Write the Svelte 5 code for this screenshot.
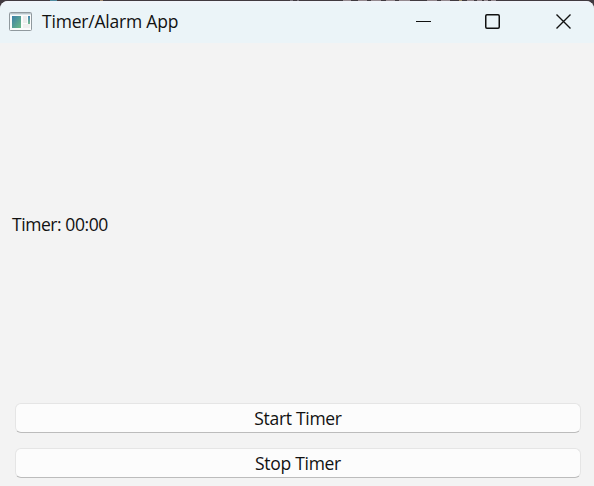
<script>
  const actions = ['Start Timer', 'Stop Timer'];
  const glints = [
    [50, 7, '#4f8ba0'],
    [100, 3, '#a08a70'],
    [290, 3, '#77737c'],
    [297, 2, '#77737c'],
    [343, 8, '#94898f'],
    [358, 9, '#94898f'],
    [371, 10, '#94898f'],
    [386, 9, '#94898f'],
    [399, 11, '#94898f'],
    [427, 10, '#94898f'],
    [441, 9, '#94898f'],
    [459, 3, '#a09070'],
    [467, 7, '#94898f'],
    [477, 5, '#94898f'],
    [484, 4, '#94898f'],
    [491, 5, '#94898f'],
  ];
</script>

<div class="desktop">
  <svg class="backdrop" width="594" height="1" viewBox="0 0 594 1">
    {#each glints as [x, width, fill]}
      <rect {x} y="0" {width} height="1" {fill} />
    {/each}
  </svg>
  <div class="window">
    <header>
      <svg class="app-icon" width="24" height="20" viewBox="0 0 24 20">
        <defs>
          <linearGradient id="pane" x1="0" y1="0" x2="1" y2="1">
            <stop offset="0" stop-color="#3c7fa8" />
            <stop offset="1" stop-color="#6dbb85" />
          </linearGradient>
          <linearGradient id="strip" x1="0" y1="0" x2="0" y2="1">
            <stop offset="0" stop-color="#4684b4" />
            <stop offset="1" stop-color="#79bd91" />
          </linearGradient>
        </defs>
        <rect x=".5" y=".5" width="22" height="18" rx="1" fill="#fbfcfc" stroke="#90999e" />
        <path d="M1 1.5h21" stroke="#b8c4ca" />
        <path d="M1 2.5h21" stroke="#dce4e8" />
        <rect x="3" y="4" width="9" height="12" fill="url(#pane)" />
        <rect x="14" y="4" width="4" height="7" fill="#ececec" />
        <rect x="14" y="12" width="7" height="4" fill="#f0f0f0" />
        <rect x="19" y="4" width="2" height="8" fill="url(#strip)" />
      </svg>
      <h1>Timer/Alarm App</h1>
      <div class="controls">
        <svg width="16" height="16" viewBox="0 0 16 16"><path d="M0 7.5h15" stroke="#111" stroke-width="1.1" /></svg>
        <svg width="16" height="16" viewBox="0 0 16 16"><rect x=".75" y=".75" width="13.5" height="13.5" rx="1.2" fill="none" stroke="#111" stroke-width="1.5" /></svg>
        <svg width="16" height="16" viewBox="0 0 16 16"><path d="M.5 .5l14 14M14.5 .5l-14 14" stroke="#111" stroke-width="1.4" /></svg>
      </div>
    </header>
    <main>
      <p><span>Timer: 00:00</span></p>
      {#each actions as action}
        <button>{action}</button>
      {/each}
    </main>
  </div>
</div>

<style>
  :global(body) {
    margin: 0;
  }
  .desktop {
    box-sizing: border-box;
    width: 594px;
    height: 486px;
    background: #403a40;
    overflow: hidden;
    font-family: 'Open Sans', 'Noto Sans', sans-serif;
    color: #111;
  }
  .window {
    height: 485px;
    display: flex;
    flex-direction: column;
    background: #f3f3f3;
    border-radius: 8px 8px 0 0;
    overflow: hidden;
  }
  header {
    box-sizing: border-box;
    height: 42px;
    flex: none;
    display: flex;
    align-items: center;
    padding: 0 22px 0 9px;
    background: linear-gradient(#f0f4fa, #ebf4f8 6px);
  }
  h1 {
    margin: 0 0 2px 9px;
    font-size: 17.5px;
    line-height: 24px;
    font-weight: 400;
    letter-spacing: -0.2px;
  }
  .controls {
    display: flex;
    gap: 54px;
    margin-left: auto;
  }
  .controls svg:nth-child(2) {
    margin: 0 1px 0 -1px;
  }
  svg {
    display: block;
  }
  main {
    flex: 1;
    display: flex;
    flex-direction: column;
    padding: 0 13px 8px 15px;
  }
  p {
    flex: 1;
    display: flex;
    align-items: center;
    margin: 16px 0 0 -3px;
    font-size: 17.5px;
    line-height: 24px;
    letter-spacing: -0.43px;
  }
  button {
    box-sizing: border-box;
    height: 30px;
    margin-top: 15px;
    padding: 0;
    border: 1px solid #e5e5e5;
    border-bottom-color: #bcbcbc;
    border-radius: 6px;
    background: #fcfcfc;
    color: #111;
    font-family: inherit;
    font-size: 17.5px;
    line-height: 28px;
    letter-spacing: -0.3px;
  }
</style>
